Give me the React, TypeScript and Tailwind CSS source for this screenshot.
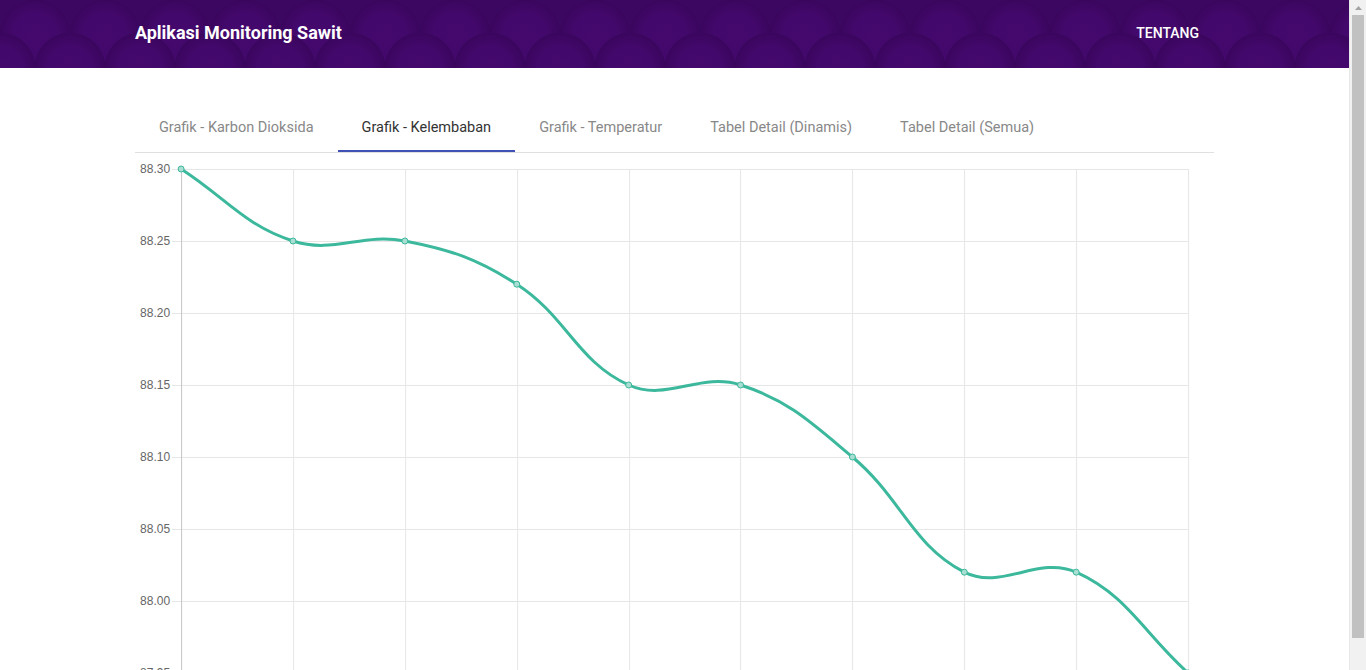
import { useMemo } from "react"

const tabs = [
  "Grafik - Karbon Dioksida",
  "Grafik - Kelembaban",
  "Grafik - Temperatur",
  "Tabel Detail (Dinamis)",
  "Tabel Detail (Semua)",
]

const values = [88.3, 88.25, 88.25, 88.22, 88.15, 88.15, 88.1, 88.02, 88.02, 87.95]
const ticks = ["88.30", "88.25", "88.20", "88.15", "88.10", "88.05", "88.00", "87.95"]

// chart area inside the svg
const LEFT = 46
const RIGHT = 1053
const TOP = 16
const STEP = 72 // px per 0.05

const toY = (v: number) => TOP + ((88.3 - v) / 0.05) * STEP
const toX = (i: number) => LEFT + (i * (RIGHT - LEFT)) / (values.length - 1)

type Pt = { x: number; y: number }

// same bezier as chart.js 2 (tension 0.4)
function curvePath(pts: Pt[]) {
  const t = 0.4
  const cps = pts.map((cur, i) => {
    const prev = pts[i - 1] ?? cur
    const next = pts[i + 1] ?? cur
    const d01 = Math.hypot(cur.x - prev.x, cur.y - prev.y)
    const d12 = Math.hypot(next.x - cur.x, next.y - cur.y)
    const s01 = d01 + d12 === 0 ? 0 : d01 / (d01 + d12)
    const s12 = d01 + d12 === 0 ? 0 : d12 / (d01 + d12)
    const fa = t * s01
    const fb = t * s12
    return {
      prev: { x: cur.x - fa * (next.x - prev.x), y: cur.y - fa * (next.y - prev.y) },
      next: { x: cur.x + fb * (next.x - prev.x), y: cur.y + fb * (next.y - prev.y) },
    }
  })
  let d = `M${pts[0].x},${pts[0].y}`
  for (let i = 1; i < pts.length; i++) {
    const a = cps[i - 1].next
    const b = cps[i].prev
    d += ` C${a.x},${a.y} ${b.x},${b.y} ${pts[i].x},${pts[i].y}`
  }
  return d
}

function HumidityChart() {
  const pts = useMemo(() => values.map((v, i) => ({ x: toX(i), y: toY(v) })), [])
  const bottom = toY(87.95)

  return (
    <svg viewBox="0 0 1079 540" className="block w-full h-[540px]">
      {/* horizontal grid + ticks */}
      {ticks.map((label, i) => {
        const y = TOP + i * STEP
        return (
          <g key={label}>
            <line x1={37} x2={RIGHT} y1={y + 0.5} y2={y + 0.5} stroke="#e6e6e6" strokeWidth={1} />
            <text
              x={35}
              y={y + 4}
              textAnchor="end"
              fontSize={12}
              fill="#666"
              fontFamily="'Liberation Sans', Arial, sans-serif"
            >
              {label}
            </text>
          </g>
        )
      })}
      {/* vertical grid */}
      {values.map((_, i) => (
        <line
          key={i}
          x1={Math.round(toX(i)) + 0.5}
          x2={Math.round(toX(i)) + 0.5}
          y1={TOP}
          y2={bottom + 10}
          stroke={i === 0 ? "#c4c4c4" : "#e6e6e6"}
          strokeWidth={1}
        />
      ))}
      <path d={curvePath(pts)} fill="none" stroke="#3cb89c" strokeWidth={3} strokeLinejoin="round" />
      {pts.map((p, i) => (
        <circle key={i} cx={p.x} cy={p.y} r={3} fill="#a9dfd2" stroke="#3cb89c" strokeWidth={1} />
      ))}
    </svg>
  )
}

function Scrollbar() {
  return (
    <div className="w-[17px] shrink-0 bg-[#f1f1f1] border-l border-[#e8e8e8] flex flex-col">
      <div className="h-[15px] flex items-center justify-center">
        <svg width="7" height="4" viewBox="0 0 7 4">
          <path d="M0 4 L3.5 0 L7 4 Z" fill="#a3a3a3" />
        </svg>
      </div>
      <div className="mx-[2px] h-[623px] bg-[#c1c1c1]" />
    </div>
  )
}

export default function App() {
  return (
    <div className="flex h-[670px] overflow-hidden bg-white font-['Roboto','Liberation_Sans',sans-serif]">
      <div className="flex-1 min-w-0">
        <header className="h-[68px] bg-[#3c0761] bg-[radial-gradient(circle_at_50%_100%,#45096e_0,#43086b_22px,#3b065f_34px,#39065c_35px,transparent_35.5px),radial-gradient(circle_at_35px_35px,#45096e_0,#43086b_22px,#3b065f_34px,#39065c_35px,transparent_35.5px)] bg-[length:70px_68px] bg-[position:35px_0,0_0]">
          <nav className="w-[80%] mx-auto h-full flex items-center justify-between">
            <span className="text-white text-[18px] font-bold pb-[3px]">Aplikasi Monitoring Sawit</span>
            <a className="px-[15px] text-white text-[14px] font-medium uppercase pb-[2px]">Tentang</a>
          </nav>
        </header>

        <main className="w-[80%] mx-auto pt-9">
          <ul className="flex h-[49px] border-b border-[#e0e0e0]">
            {tabs.map((tab, i) => (
              <li
                key={tab}
                className={`relative px-6 leading-[47px] text-[14.5px] whitespace-nowrap ${
                  i === 1 ? "text-[#333]" : "text-[#888]"
                }`}
              >
                {tab}
                {i === 1 && <span className="absolute left-0 right-0 bottom-0 h-[2px] bg-[#3f51b5]" />}
              </li>
            ))}
          </ul>
          <HumidityChart />
        </main>
      </div>
      <Scrollbar />
    </div>
  )
}
